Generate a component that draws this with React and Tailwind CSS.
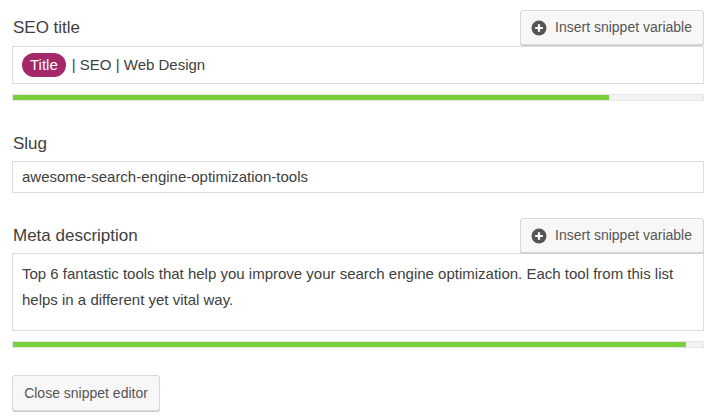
import React from 'react';

const PlusCircle = () => (
  <svg width="16" height="16" viewBox="0 0 16 16" className="shrink-0">
    <circle cx="8" cy="8" r="7.5" fill="#555" />
    <path d="M8 4.2v7.6M4.2 8h7.6" stroke="#fff" strokeWidth="2.2" />
  </svg>
);

const SnippetButton = () => (
  <button className="flex items-center gap-[8px] h-[35px] pl-[10px] pr-[11px] bg-[#f7f7f7] border border-[#d8d8d8] rounded-[3px] text-[14px] text-[#555] shadow-[0_1px_0_#ccc]">
    <PlusCircle />
    <span>Insert snippet variable</span>
  </button>
);

const Progress = ({ value }) => (
  <div className="h-[7px] bg-[#f3f3f3] border border-[#e6e6e6]">
    <div className="h-full bg-[#7ad03a]" style={{ width: `${value}%` }} />
  </div>
);

export default function App() {
  return (
    <div className="w-[720px] h-[418px] bg-white px-[12px] pt-[10px] font-['Liberation_Sans',Arial,sans-serif] text-[#404040] overflow-hidden">
      <div className="pr-[4px]">
        <div className="flex items-center justify-between h-[35px]">
          <label className="text-[17px] pl-[1px] pt-[1px]">SEO title</label>
          <SnippetButton />
        </div>
        <div className="mt-[1px] h-[38px] border border-[#ddd] flex items-center pl-[9px] gap-[6px] text-[15px]">
          <span className="bg-[#a4286a] text-white rounded-full h-[24px] px-[8px] flex items-center">Title</span>
          <span>| SEO | Web Design</span>
        </div>
        <div className="mt-[10px]">
          <Progress value={86.4} />
        </div>

        <label className="block mt-[33px] text-[17px] pl-[1px] leading-[20px]">Slug</label>
        <div className="mt-[7px] h-[32px] border border-[#ddd] flex items-center pl-[9px] text-[15px]">
          awesome-search-engine-optimization-tools
        </div>

        <div className="mt-[25px] flex items-center justify-between h-[35px]">
          <label className="text-[17px] pl-[1px] pt-[1px]">Meta description</label>
          <SnippetButton />
        </div>
        <div className="h-[78px] border border-[#ddd] px-[9px] pt-[7px] text-[15px] leading-[26px]">
          Top 6 fantastic tools that help you improve your search engine optimization. Each tool from this list helps in a different yet vital way.
        </div>
        <div className="mt-[10px]">
          <Progress value={97.5} />
        </div>
      </div>

      <button className="mt-[27px] h-[36px] w-[148px] bg-[#f7f7f7] border border-[#d8d8d8] rounded-[3px] text-[14px] text-[#555] shadow-[0_1px_0_#ccc]">
        Close snippet editor
      </button>
    </div>
  );
}
